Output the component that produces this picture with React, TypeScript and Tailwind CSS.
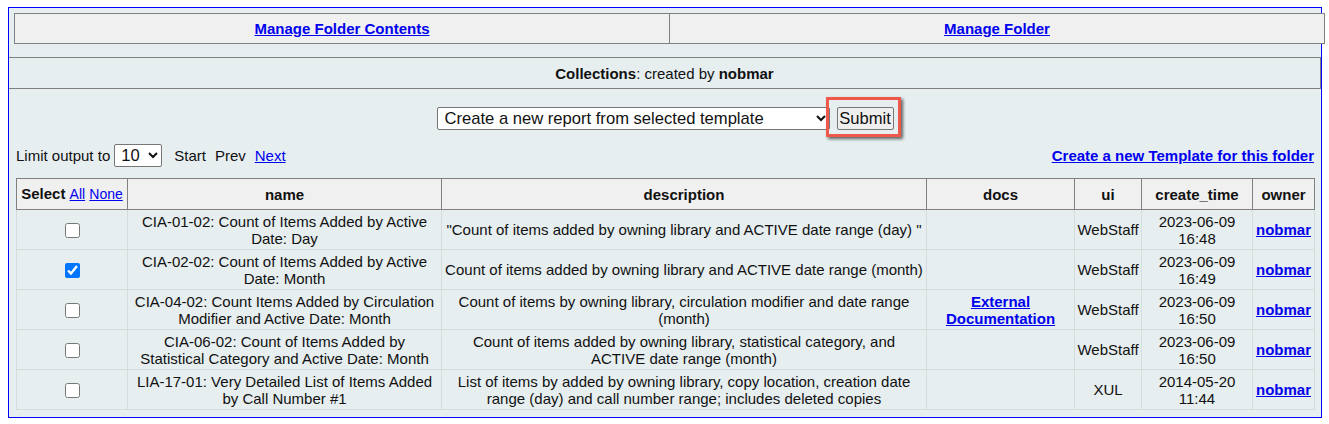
import React from 'react';

type Row = {
  name: string;
  description: string;
  docs?: boolean;
  ui: string;
  date: string;
  time: string;
  checked?: boolean;
};

const rows: Row[] = [
  {
    name: 'CIA-01-02: Count of Items Added by Active\nDate: Day',
    description: '"Count of items added by owning library and ACTIVE date range (day) "',
    ui: 'WebStaff',
    date: '2023-06-09',
    time: '16:48',
  },
  {
    name: 'CIA-02-02: Count of Items Added by Active\nDate: Month',
    description: 'Count of items added by owning library and ACTIVE date range (month)',
    ui: 'WebStaff',
    date: '2023-06-09',
    time: '16:49',
    checked: true,
  },
  {
    name: 'CIA-04-02: Count Items Added by Circulation\nModifier and Active Date: Month',
    description: 'Count of items by owning library, circulation modifier and date range\n(month)',
    docs: true,
    ui: 'WebStaff',
    date: '2023-06-09',
    time: '16:50',
  },
  {
    name: 'CIA-06-02: Count of Items Added by\nStatistical Category and Active Date: Month',
    description: 'Count of items added by owning library, statistical category, and\nACTIVE date range (month)',
    ui: 'WebStaff',
    date: '2023-06-09',
    time: '16:50',
  },
  {
    name: 'LIA-17-01: Very Detailed List of Items Added\nby Call Number #1',
    description:
      'List of items by added by owning library, copy location, creation date\nrange (day) and call number range; includes deleted copies',
    ui: 'XUL',
    date: '2014-05-20',
    time: '11:44',
  },
];

const link = 'text-[#0000ee] underline';
const th = 'border border-[#808080] bg-[#f0f0f0] font-bold px-[2px] h-[31px]';
const td = 'border border-[#d6dcdc] px-[1px] h-[40px] align-middle text-center';

const App: React.FC = () => {
  return (
    <div className="pt-[7px] pl-[8px] text-[15px] leading-[17px] text-[#111] font-['Liberation_Sans',Arial,sans-serif]">
      <div className="w-[1314px] h-[411px] border border-[#0000ff] bg-[#e6eef0]">
        {/* top nav */}
        <div className="ml-[5px] mt-[5px] w-[1311px] h-[31px] flex border border-[#808080] bg-[#f0f0f0]">
          <div className="w-[655px] flex items-center justify-center border-r border-[#808080] font-bold">
            <a href="#" className={link}>Manage Folder Contents</a>
          </div>
          <div className="flex-1 flex items-center justify-center font-bold">
            <a href="#" className={link}>Manage Folder</a>
          </div>
        </div>

        {/* collections bar */}
        <div className="mt-[13px] w-[1312px] h-[32px] flex items-center justify-center border-y border-r border-[#808080]">
          <span>
            <b>Collections</b>: created by <b>nobmar</b>
          </span>
        </div>

        {/* action row */}
        <div className="mt-[18px] flex justify-center items-center">
          <select className="w-[393px] h-[23px] text-[16.6px] leading-[19px] border border-[#767676] rounded-[2px] bg-white pl-[3px] font-['Liberation_Sans',Arial,sans-serif]">
            <option>Create a new report from selected template</option>
          </select>
          <div className="relative ml-[7px]">
            <button className="h-[23px] w-[57px] text-[16.6px] leading-[19px] border border-[#767676] rounded-[2px] bg-[#efefef] font-['Liberation_Sans',Arial,sans-serif]">
              Submit
            </button>
            <div className="absolute -left-[11px] -top-[10px] w-[75px] h-[40px] border-[3px] border-[#f0584c] shadow-[2px_2px_3px_rgba(0,0,0,0.6)] pointer-events-none"></div>
          </div>
        </div>

        {/* limit row */}
        <div className="mt-[14px] ml-[7px] w-[1298px] flex items-center justify-between">
          <div className="flex items-center">
            <span>Limit output to</span>
            <select className="ml-[4px] w-[48px] h-[23px] text-[16.6px] leading-[19px] border border-[#767676] rounded-[2px] bg-white pl-[2px] font-['Liberation_Sans',Arial,sans-serif]">
              <option>10</option>
            </select>
            <span className="ml-[12px]">Start</span>
            <span className="ml-[9px]">Prev</span>
            <a href="#" className={`ml-[9px] ${link}`}>Next</a>
          </div>
          <a href="#" className={`font-bold ${link}`}>Create a new Template for this folder</a>
        </div>

        {/* report table */}
        <table className="mt-[11px] ml-[7px] w-[1298px] table-fixed border-collapse">
          <colgroup>
            <col className="w-[111px]" />
            <col className="w-[314px]" />
            <col className="w-[485px]" />
            <col className="w-[148px]" />
            <col className="w-[67px]" />
            <col className="w-[111px]" />
            <col className="w-[62px]" />
          </colgroup>
          <thead>
            <tr>
              <th className={th}>
                Select{' '}
                <a href="#" className={`font-normal text-[14px] ${link}`}>All</a>{' '}
                <a href="#" className={`font-normal text-[14px] ${link}`}>None</a>
              </th>
              <th className={th}>name</th>
              <th className={th}>description</th>
              <th className={th}>docs</th>
              <th className={th}>ui</th>
              <th className={th}>create_time</th>
              <th className={th}>owner</th>
            </tr>
          </thead>
          <tbody>
            {rows.map((r) => (
              <tr key={r.name}>
                <td className={td}>
                  <input type="checkbox" defaultChecked={r.checked} className="w-[15px] h-[15px] align-middle" />
                </td>
                <td className={`${td} whitespace-pre-line`}>{r.name}</td>
                <td className={`${td} whitespace-pre-line`}>{r.description}</td>
                <td className={td}>
                  {r.docs && (
                    <a href="#" className={`font-bold ${link}`}>External Documentation</a>
                  )}
                </td>
                <td className={td}>{r.ui}</td>
                <td className={td}>
                  {r.date}
                  <br />
                  {r.time}
                </td>
                <td className={td}>
                  <a href="#" className={`font-bold ${link}`}>nobmar</a>
                </td>
              </tr>
            ))}
          </tbody>
        </table>
      </div>
    </div>
  );
};

export default App;
